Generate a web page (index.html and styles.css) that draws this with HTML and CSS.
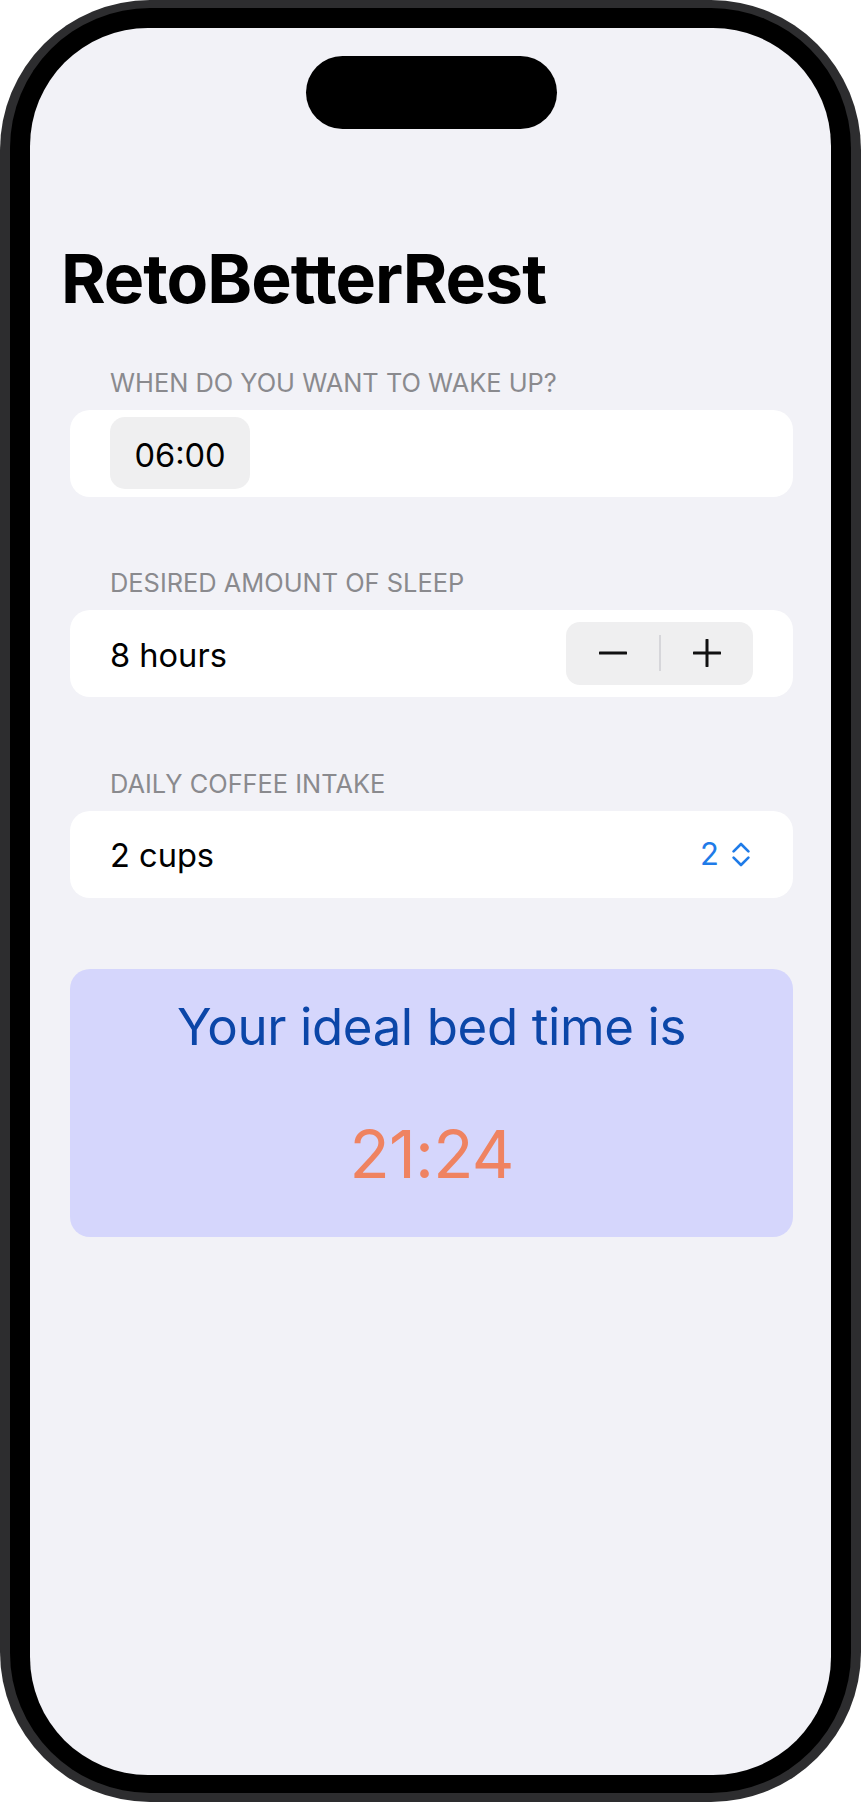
FILE: index.html
```html
<!DOCTYPE html>
<html lang="en">
<head>
<meta charset="utf-8">
<title>RetoBetterRest</title>
<link rel="stylesheet" href="styles.css">
</head>
<body>
<div class="phone">
  <div class="bezel">
    <div class="screen">
      <div class="island"></div>
      <main class="content">
        <h1 class="title">RetoBetterRest</h1>
        <div class="form">
          <section class="section">
            <h2 class="section-header">When do you want to wake up?</h2>
            <div class="card row">
              <div class="time-pill">06:00</div>
            </div>
          </section>
          <section class="section">
            <h2 class="section-header">Desired amount of sleep</h2>
            <div class="card row">
              <span class="row-label">8 hours</span>
              <div class="stepper">
                <button class="step-btn" aria-label="Decrement">
                  <svg width="28" height="4" viewBox="0 0 28 4"><line x1="1" y1="2" x2="27" y2="2" stroke="#111" stroke-width="3" stroke-linecap="round"/></svg>
                </button>
                <span class="step-divider"></span>
                <button class="step-btn" aria-label="Increment">
                  <svg width="28" height="28" viewBox="0 0 28 28"><line x1="1" y1="14" x2="27" y2="14" stroke="#111" stroke-width="3" stroke-linecap="round"/><line x1="14" y1="1" x2="14" y2="27" stroke="#111" stroke-width="3" stroke-linecap="round"/></svg>
                </button>
              </div>
            </div>
          </section>
          <section class="section">
            <h2 class="section-header">Daily coffee intake</h2>
            <div class="card row">
              <span class="row-label">2 cups</span>
              <div class="picker">
                <span class="picker-value">2</span>
                <svg class="picker-icon" width="18" height="25" viewBox="0 0 18 25"><polyline points="1.6,9.4 9,2 16.4,9.4" fill="none" stroke="#1f7be8" stroke-width="2.6" stroke-linecap="round" stroke-linejoin="round"/><polyline points="1.6,15.6 9,23 16.4,15.6" fill="none" stroke="#1f7be8" stroke-width="2.6" stroke-linecap="round" stroke-linejoin="round"/></svg>
              </div>
            </div>
          </section>
          <section class="result">
            <p class="result-title">Your ideal bed time is</p>
            <p class="result-time">21:24</p>
          </section>
        </div>
      </main>
    </div>
  </div>
</div>
</body>
</html>
```

FILE: styles.css
```css
* { box-sizing: border-box; }

html, body {
  margin: 0;
  padding: 0;
  background: #ffffff;
}

body {
  font-family: Inter, "Noto Sans", "Liberation Sans", sans-serif;
  color: #000;
}

.phone {
  width: 861px;
  height: 1802px;
  padding: 8px 10px 9px;
  background: #2d2d2f;
  border-radius: 150px;
}

.bezel {
  height: 100%;
  padding: 20px 20px 18px;
  background: #000;
  border-radius: 140px;
}

.screen {
  position: relative;
  height: 100%;
  background: #f2f2f7;
  border-radius: 118px;
  overflow: hidden;
}

.island {
  position: absolute;
  top: 28px;
  left: 276px;
  width: 251px;
  height: 73px;
  background: #000;
  border-radius: 37px;
}

.content {
  padding: 208.5px 38px 0 40px;
}

.title {
  margin: 0 0 49px -9px;
  font-size: 68px;
  line-height: 82px;
  font-weight: 700;
  letter-spacing: -1px;
}

.form {
  display: flex;
  flex-direction: column;
  gap: 71.5px;
}

.section {
  display: flex;
  flex-direction: column;
  gap: 12px;
}

.section-header {
  margin: 0;
  padding-left: 40px;
  font-size: 25.4px;
  line-height: 30px;
  font-weight: 400;
  text-transform: uppercase;
  color: #8a8a8e;
}

.card {
  background: #fff;
  border-radius: 20px;
  height: 87px;
}

.row {
  display: flex;
  align-items: center;
  justify-content: space-between;
  padding: 0 40px;
}

.row-label {
  font-size: 32.6px;
  line-height: 40px;
  padding-top: 2px;
}

.time-pill {
  width: 140px;
  height: 71.6px;
  padding-top: 3px;
  display: flex;
  align-items: center;
  justify-content: center;
  background: #efeff0;
  border-radius: 15px;
  font-size: 32.6px;
}

.stepper {
  display: flex;
  align-items: center;
  width: 186.6px;
  height: 62.3px;
  background: #efeff0;
  border-radius: 14px;
}

.step-btn {
  flex: 1;
  height: 100%;
  border: 0;
  padding: 0;
  background: transparent;
  display: flex;
  align-items: center;
  justify-content: center;
}

.step-divider {
  width: 2px;
  height: 36px;
  background: #d6d6da;
}

.picker {
  display: flex;
  align-items: center;
  gap: 13px;
  margin-right: 3px;
}

.picker-value {
  font-size: 31px;
  line-height: 40px;
  color: #1f7be8;
}

.picker-icon {
  display: block;
}

.result {
  height: 267.5px;
  padding: 25.5px 0 0;
  background: #d5d6fc;
  border-radius: 20px;
  text-align: center;
}

.result-title {
  margin: 0;
  font-size: 51px;
  line-height: 64px;
  letter-spacing: -0.4px;
  color: #0b46a8;
}

.result-time {
  margin: 55px 0 0;
  font-size: 66px;
  line-height: 80px;
  letter-spacing: -0.8px;
  color: #ef8361;
}
```
